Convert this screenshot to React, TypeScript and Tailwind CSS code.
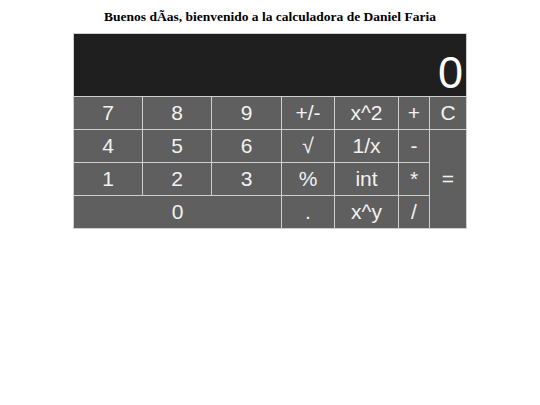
const keys: { label: string; cls?: string }[] = [
  { label: "7" },
  { label: "8" },
  { label: "9" },
  { label: "+/-" },
  { label: "x^2" },
  { label: "+" },
  { label: "C" },
  { label: "4" },
  { label: "5" },
  { label: "6" },
  { label: "\u221A" },
  { label: "1/x" },
  { label: "-" },
  { label: "=", cls: "row-span-3" },
  { label: "1" },
  { label: "2" },
  { label: "3" },
  { label: "%" },
  { label: "int" },
  { label: "*" },
  { label: "0", cls: "col-span-3" },
  { label: "." },
  { label: "x^y" },
  { label: "/" },
];

export default function App() {
  return (
    <div className="min-h-screen bg-white">
      <h1 className="pt-[8px] text-center font-['Liberation_Serif',serif] text-[13.5px] leading-[17px] font-bold text-black">
        Buenos dÃ{"\u00AD"}as, bienvenido a la calculadora de Daniel Faria
      </h1>
      <div className="mx-auto mt-[8px] grid w-[394px] grid-cols-[68px_68px_69px_52px_63px_30px_36px] grid-rows-[62px_32px_32px_32px_32px] gap-px bg-[#cfcfcf] p-px font-['Liberation_Sans',Arial,sans-serif]">
        <div className="col-span-7 flex items-end justify-end bg-[#1f1f1f] pr-[3px] text-[45px] leading-[47px] font-light text-white">
          0
        </div>
        {keys.map((k) => (
          <div
            key={k.label}
            className={`flex items-center justify-center bg-[#5f5f5f] text-[21px] text-[#f2f2f2] ${k.cls ?? ""}`}
          >
            {k.label}
          </div>
        ))}
      </div>
    </div>
  );
}
